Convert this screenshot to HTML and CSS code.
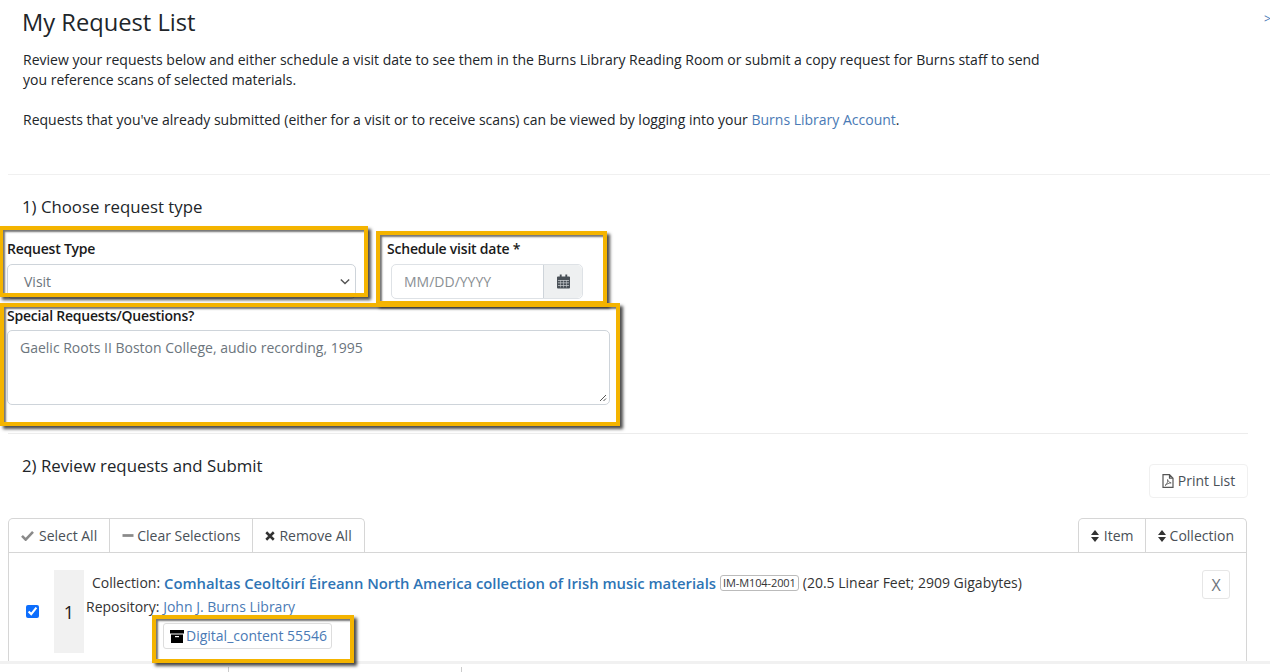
FILE: index.html
```html
<!DOCTYPE html>
<html lang="en">
<head>
<meta charset="utf-8">
<title>My Request List</title>
<link rel="stylesheet" href="styles.css">
</head>
<body>
<a class="drawer" href="#">&gt;</a>
<main class="page">
  <header class="intro">
    <h1>My Request List</h1>
    <p>Review your requests below and either schedule a visit date to see them in the Burns Library Reading Room or submit a copy request for Burns staff to send you reference scans of selected materials.</p>
    <p>Requests that you've already submitted (either for a visit or to receive scans) can be viewed by logging into your <a href="#">Burns Library Account</a>.</p>
  </header>

  <section class="step-one">
    <h2>1) Choose request type</h2>
    <div class="fields">
      <div class="field field-type">
        <label>Request Type</label>
        <div class="fake-select">Visit
          <svg viewBox="0 0 12 8" width="10" height="7"><path d="M1 1.500l5 5 5-5" fill="none" stroke="#555" stroke-width="1.700"/></svg>
        </div>
      </div>
      <div class="field field-date">
        <label>Schedule visit date *</label>
        <div class="date-group">
          <span class="date-input">MM/DD/YYYY</span>
          <span class="date-btn">
            <svg viewBox="0 0 14 15" width="13" height="15"><path fill="#495057" d="M3 0h2v2h4V0h2v2h2a1 1 0 0 1 1 1v11a1 1 0 0 1-1 1H1a1 1 0 0 1-1-1V3a1 1 0 0 1 1-1h2z"/><path fill="#c9cdd1" d="M1 6h12v.6H1zM1 8.700h12v.6H1zM1 11.400h12v.6H1zM3.600 6h.6v8h-.6zM6.700 6h.6v8h-.6zM9.800 6h.6v8h-.6z"/></svg>
          </span>
        </div>
      </div>
    </div>
    <div class="field field-notes">
      <label>Special Requests/Questions?</label>
      <div class="fake-textarea">Gaelic Roots II Boston College, audio recording, 1995
        <svg class="grip" viewBox="0 0 8 8" width="8" height="8"><path d="M1 7l6-6M4.500 7L7 4.500" stroke="#555" stroke-width="1"/></svg>
      </div>
    </div>
  </section>

  <section class="step-two">
    <div class="step-head">
      <h2>2) Review requests and Submit</h2>
      <a class="print" href="#">
        <svg viewBox="0 0 12 14" width="12" height="14"><path d="M1 .7h6.500L11 4.200v9.100H1z M7.500 .7v3.500H11" fill="none" stroke="#555" stroke-width="1.200"/><path d="M3 11.500c2-1 3-4 2.600-6 .6 2 1.600 3 3.600 3.400-2 0-4.400 1-6.200 2.600z" fill="none" stroke="#555" stroke-width=".8"/></svg>
        Print List
      </a>
    </div>
    <div class="toolbar">
      <div class="tabs">
        <a class="tab-select" href="#"><svg viewBox="0 0 14 12" width="13" height="11"><path d="M1 6.500l4 4 8-8.500" fill="none" stroke="#8a8a8a" stroke-width="2.800"/></svg>Select All</a>
        <a href="#"><svg viewBox="0 0 12 12" width="12" height="11"><path d="M0 4.500h12v3H0z" fill="#8a8a8a"/></svg>Clear Selections</a>
        <a class="tab-remove" href="#"><svg viewBox="0 0 12 12" width="10" height="10"><path d="M1.500 1.500l9 9m0-9l-9 9" stroke="#333" stroke-width="3"/></svg>Remove All</a>
      </div>
      <div class="tabs">
        <a class="tab-sort" href="#"><svg viewBox="0 0 8 12" width="8" height="12"><path d="M4 0l4 5H0zM4 12L0 7h8z" fill="#333"/></svg>Item</a>
        <a class="tab-sort-last" href="#"><svg viewBox="0 0 8 12" width="8" height="12"><path d="M4 0l4 5H0zM4 12L0 7h8z" fill="#333"/></svg>Collection</a>
      </div>
    </div>
    <article class="request">
      <input class="check" type="checkbox" checked>
      <div class="num">1</div>
      <div class="details">
        <div class="line-one">
          <span class="key">Collection:</span>
          <a class="title" href="#">Comhaltas Ceoltóirí Éireann North America collection of Irish music materials</a>
          <span class="tag">IM-M104-2001</span>
          <span>(20.5 Linear Feet; 2909 Gigabytes)</span>
        </div>
        <div class="line-two"><span class="key">Repository:</span> <a href="#">John J. Burns Library</a></div>
        <a class="box-link" href="#">
          <svg viewBox="0 0 14 13" width="14" height="13"><path d="M0 0h14v3.500H0zM1 4.500h12V13H1z" fill="#000"/><path d="M5 6h4v1.200H5z" fill="#fff"/></svg>
          Digital_content 55546
        </a>
      </div>
      <a class="remove" href="#">X</a>
    </article>
  </section>
  <footer class="strip"><span></span><span></span><span></span></footer>
</main>
<div class="mark mark-type"></div>
<div class="mark mark-date"></div>
<div class="mark mark-notes"></div>
<div class="mark mark-box"></div>
</body>
</html>
```

FILE: styles.css
```css
* { box-sizing: border-box; }
html, body { margin: 0; height: 672px; overflow: hidden; background: #fff; }
body { font: 14px/20px "Open Sans", sans-serif; color: #212529; position: relative; }
a { color: #4a7ab5; text-decoration: none; }
h1, h2, p { margin: 0; font-weight: 400; }

.drawer { position: absolute; top: 9px; left: 1264px; font-size: 12px; }

.page { display: flex; flex-direction: column; height: 672px; }

.intro { height: 175px; margin-left: 8px; padding: 7px 220px 0 15px; border-bottom: 1px solid #f0f0f0; }
.intro h1 { font-size: 23.700px; line-height: 30px; margin: 0 0 13px -1px; }
.intro p { margin-bottom: 20px; }

.step-one { height: 259px; margin: 0 22px 0 8px; border-bottom: 1px solid #ececec; }
.step-one h2, .step-head h2 { font-size: 16.800px; line-height: 24px; }
.step-one h2 { margin: 0 0 11px 14px; padding-top: 20px; height: 53px; }
.fields { display: flex; }
label { display: block; font-weight: 600; line-height: 20px; color: #1a1a1a; letter-spacing: -.22px; }
.field-type { width: 349px; margin-left: -1px; }
.field-date { margin-left: 31px; }
.field-type label, .field-date label { height: 25px; }
.fake-select { display: flex; justify-content: space-between; align-items: center; height: 35px; padding: 0 5px 0 16px; border: 1px solid #ced4da; border-radius: 5px; color: #6c757d; }
.date-group { display: flex; margin-left: 4px; width: 192px; height: 35px; border: 1px solid #dee2e6; border-radius: 5px; color: #8a8f94; }
.date-input { flex: 1; padding: 7px 12px; }
.date-btn { width: 39px; display: flex; align-items: center; justify-content: center; background: #eef0f1; border-left: 1px solid #ced4da; border-radius: 0 5px 5px 0; }

.field-notes { margin: 7px 0 0 -1px; width: 603px; }
.field-notes label { height: 24px; }
.fake-textarea { position: relative; height: 75px; padding: 7px 12px; border: 1px solid #ced4da; border-radius: 5px; color: #6c757d; }
.grip { position: absolute; right: 2px; bottom: 2px; }

.step-two { flex: 1; margin-left: 8px; width: 1240px; overflow: hidden; }
.step-head { display: flex; justify-content: space-between; height: 84px; }
.step-head h2 { margin: 20px 0 0 14px; }
.print { display: flex; align-items: center; gap: 4px; align-self: flex-start; width: 99px; height: 34px; margin-top: 30px; justify-content: center; color: #495057; border: 1px solid #f0f0f0; border-radius: 4px; }

.toolbar { display: flex; justify-content: space-between; padding-right: 1px; }
.tabs { display: flex; height: 34px; border: 1px solid #d6d6d6; border-bottom: 0; border-radius: 5px 5px 0 0; }
.tabs a { display: flex; align-items: center; gap: 3px; padding: 0 12px; color: #495057; border-left: 1px solid #d6d6d6; }
.tabs a:first-child { border-left: 0; }
.tabs .tab-select { gap: 5px; }
.tabs .tab-remove { gap: 4px; }
.tabs .tab-sort { gap: 5px; padding-right: 11px; }
.tabs .tab-sort-last { gap: 4px; }

.request { display: flex; height: 110px; margin-right: 1px; border: 1px solid #d6d6d6; border-bottom: 0; position: relative; }
.check { width: 13px; height: 13px; margin: 52px 0 0 17px; accent-color: #0d6efd; }
.num { width: 30px; height: 83px; margin: 17px 0 0 15px; background: #f1f1f1; font-size: 18px; display: flex; align-items: center; justify-content: center; color: #1a1a1a; }
.details { flex: 1; padding-top: 18px; position: relative; }
.line-one { display: flex; align-items: center; gap: 4px; height: 24px; margin-left: 8px; color: #333; }
.title { font-size: 14.800px; font-weight: 600; color: #2e74b5; }
.tag { font-size: 11px; line-height: 14px; padding: 0 2px; border: 1px solid #bbb; border-radius: 3px; letter-spacing: -.1px; }
.line-two { margin: 2px 0 0 2px; height: 22px; }
.key { color: #333; }
.box-link { display: inline-flex; align-items: center; gap: 2px; margin: 4px 0 0 79px; height: 26px; padding: 0 4px 0 6px; border: 1px solid #ddd; border-radius: 3px; }
.remove { position: absolute; top: 17px; right: 16px; width: 28px; height: 29px; display: flex; align-items: center; justify-content: center; font-size: 16px; color: #6c757d; border: 1px solid #e6e6e6; border-radius: 3px; }

.strip { flex: none; display: flex; height: 11px; border-top: 3px solid #f1f1f1; background: #fff; position: relative; z-index: 2; }
.strip span { width: 233px; border-right: 1px solid #ccc; margin-top: 3px; }
.strip span:first-child { width: 229px; }
.strip span:last-child { border: 0; }

.mark { position: absolute; border: 4px solid #f4b400; box-shadow: 3px 3px 3px rgba(0, 0, 0, .7), inset 2px 2px 2px rgba(0, 0, 0, .55); pointer-events: none; z-index: 3; }
.mark-type { left: -1px; top: 226px; width: 369px; height: 71px; }
.mark-date { left: 376px; top: 231px; width: 231px; height: 74px; }
.mark-notes { left: 0; top: 303px; width: 620px; height: 123px; }
.mark-box { left: 152px; top: 615px; width: 202px; height: 48px; }
```
